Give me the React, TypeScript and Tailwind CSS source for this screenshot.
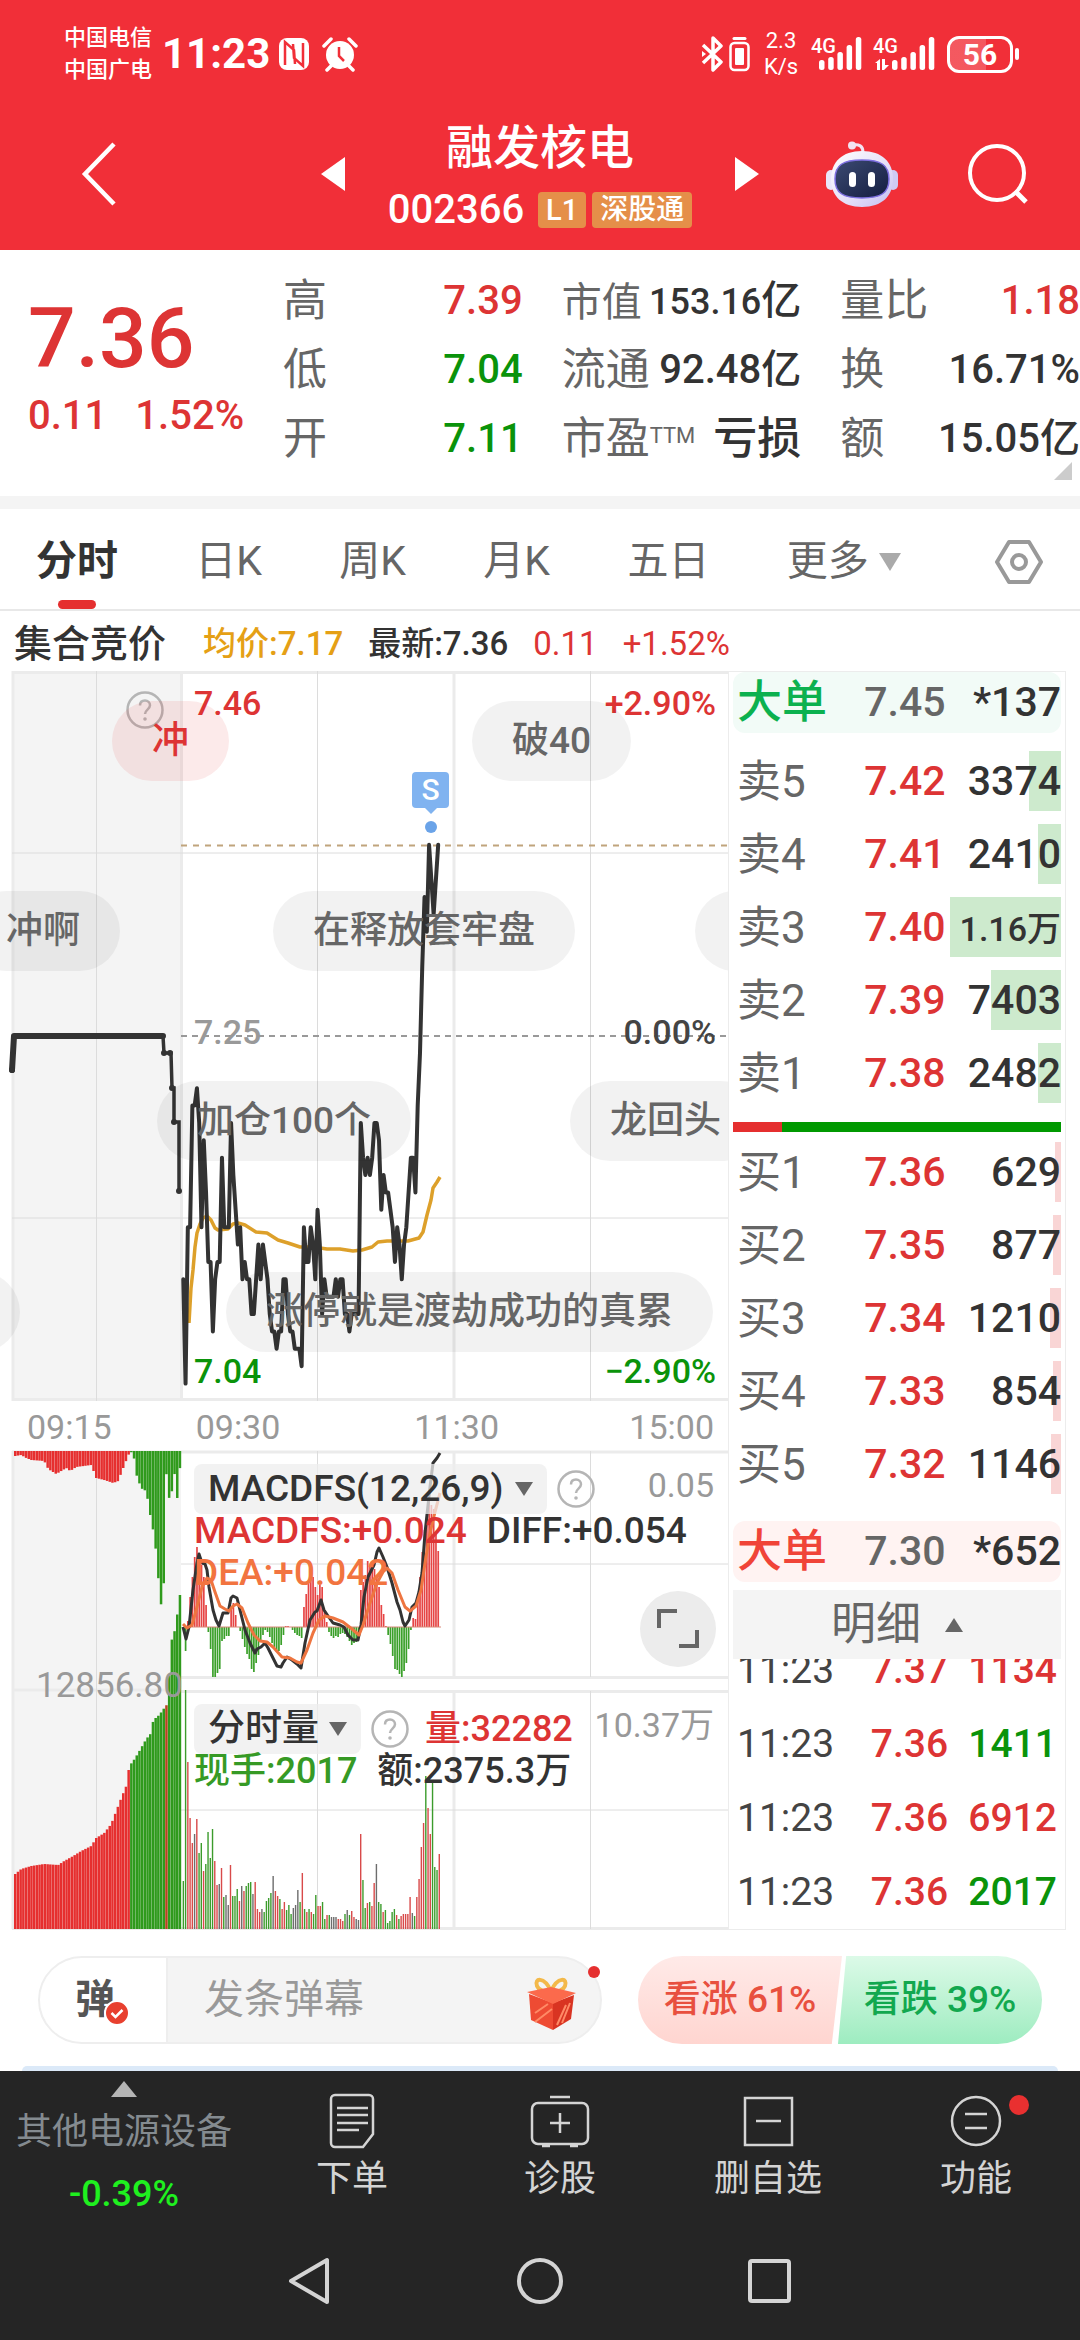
import React from 'react';

type Point = [number, number];

const DOWN = 'text-[#0a930a]';
const UP = 'text-[#dd3434]';

/* ---------- market data ---------- */

// cents below yesterday's close, one value per minute from 09:30
const ticks = [
  14, 20, 11, 11, 4, 4, 3, 5, 11, 6, 9, 13, 13, 17, 14, 13, 13, 7, 11, 11,
  11, 5, 8, 10, 12, 11, 14, 13, 14, 14, 16, 16, 14, 12, 14, 12, 13, 14, 16, 17,
  17, 18, 17, 17, 14, 14, 16, 17, 17, 18, 18, 18, 19, 11, 13, 13, 11, 12, 14, 10,
  12, 16, 14, 15, 15, 15, 15, 14, 15, 14, 14, 16, 16, 17, 16, 16, 16, 16, 5, 7,
  8, 7, 8, 7, 5, 5, 6, 10, 8, 9, 9, 10, 11, 13, 11, 12, 14, 12, 11, 9,
  7, 7, 9, 4, 1, -4, -8, -6, -11, -9, -7, -9, -11,
];

const average: Point[] = [
  [189, 652], [191, 617], [193, 599], [195, 576], [197, 562], [200, 553], [203, 547], [207, 545],
  [211, 549], [215, 557], [218, 559], [228, 558], [233, 553], [238, 552], [245, 554], [256, 561],
  [267, 562], [278, 569], [288, 572], [300, 576], [313, 576], [327, 578], [340, 578], [353, 580],
  [362, 579], [372, 576], [378, 571], [387, 570], [408, 570], [419, 567], [423, 561], [427, 544],
  [431, 529], [433, 517], [437, 511], [440, 506],
];

const macdBars = [
  0, -24, 6, 30, 50, 70, 80, 73, 62, 50, 22, -5, -22, -50, -50, -46, -42, -14, -12, -9,
  -9, 20, 24, 12, 0, -4, -12, -20, -27, -32, -42, -45, -36, -28, -13, -8, -3, -5, -10, -16,
  -20, -25, -24, -18, -8, 1, 1, 0, -3, -6, -8, -9, -11, 20, 33, 43, 48, 50, 40, 32,
  42, 40, 17, 5, -5, -9, -11, -9, -10, -7, -6, -7, -10, -14, -18, -16, -15, -8, 37, 45,
  52, 66, 60, 62, 58, 52, 40, 22, 13, 1, -8, -17, -29, -42, -43, -47, -50, -44, -36, -22,
  -3, 9, 8, 30, 50, 75, 97, 115, 130, 122, 118, 93, 76,
];

const diffLine: Point[] = [
  [183, 177], [186, 189], [189, 177], [193, 140], [197, 113], [199, 104], [202, 113], [205, 114],
  [207, 120], [209, 137], [213, 160], [216, 170], [219, 176], [223, 163], [228, 163], [231, 148],
  [233, 146], [237, 148], [240, 160], [245, 180], [250, 193], [255, 203], [257, 199], [261, 197],
  [265, 193], [268, 198], [273, 208], [277, 216], [281, 217], [283, 213], [287, 207], [292, 210],
  [297, 214], [301, 218], [305, 193], [310, 170], [315, 162], [317, 161], [321, 150], [324, 160],
  [328, 166], [333, 173], [340, 175], [344, 177], [348, 185], [353, 190], [358, 190], [361, 175],
  [364, 147], [368, 127], [374, 115], [377, 102], [379, 98], [383, 107], [387, 117], [392, 133],
  [397, 152], [400, 160], [403, 172], [405, 176], [409, 170], [412, 157], [416, 153], [419, 142],
  [422, 123], [425, 83], [430, 37], [433, 13], [437, 8], [440, 3],
];

const deaLine: Point[] = [
  [183, 174], [187, 178], [192, 175], [197, 157], [202, 137], [207, 128], [211, 130], [215, 142],
  [220, 156], [225, 159], [229, 161], [233, 156], [237, 154], [242, 158], [248, 173], [254, 185],
  [260, 191], [267, 192], [273, 197], [282, 207], [290, 208], [297, 212], [301, 213], [307, 200],
  [313, 183], [319, 170], [325, 166], [333, 168], [343, 172], [352, 179], [359, 185], [363, 175],
  [370, 153], [377, 133], [383, 122], [387, 118], [392, 123], [398, 140], [405, 157], [410, 161],
  [416, 156], [421, 140], [425, 113], [430, 83], [435, 62], [440, 43],
];

// r = up, g = down, k = flat
const volumes = (
  'g48 g239 r167 r111 r86 k95 r110 g76 g86 r58 g65 g97 g71 g100 r68 r44 k45 r61 g32 k34 ' +
  'k24 r64 g33 g33 g40 r28 k43 r38 g43 g46 g47 k35 r47 r20 r17 k20 g17 g28 g31 g36 ' +
  'k53 r38 r33 g30 r20 r27 g19 g24 g15 k21 k24 k39 g27 r56 g20 r17 g20 r17 g15 g34 ' +
  'r23 r23 g27 g10 r14 g14 k12 k12 k12 r10 r10 r8 g15 k19 g14 r18 r12 k10 k9 r95 ' +
  'g49 g21 r26 g27 r23 r46 k65 g27 g25 r17 g19 g6 g8 g17 g20 r14 g10 r13 r15 r15 ' +
  'r15 r32 k16 g13 r32 r50 r82 r106 g153 r121 r95 g147 g62 g59 r75'
).split(' ');

const volumeColors: Record<string, string> = { r: '#d84a4a', g: '#3c9c2c', k: '#6d6d6d' };

// call auction: depth of unmatched orders (top) and matched volume (bottom)
const unmatched: Point[] = [
  [14, 5], [20, 4], [25, 7], [30, 9], [43, 10], [47, 18], [55, 23], [60, 20], [65, 17], [69, 20],
  [75, 16], [90, 14], [95, 27], [103, 29], [112, 32], [117, 30], [120, 22], [124, 12], [127, 4],
  [130, 1], [133, 8], [136, 28], [141, 38], [145, 40], [149, 64], [152, 80], [155, 102],
  [158, 138], [160, 155], [162, 176], [164, 1], [166, 38], [169, 52], [172, 30], [175, 14],
  [177, 80], [179, 6], [181, 6],
];
const matched: Point[] = [
  [14, 55], [20, 60], [30, 63], [43, 65], [57, 64], [63, 68], [72, 73], [80, 78], [90, 83],
  [95, 91], [103, 96], [110, 105], [115, 118], [120, 131], [125, 143], [128, 163], [132, 168],
  [137, 176], [145, 190], [150, 196], [152, 209], [158, 214], [163, 221], [167, 226], [169, 287],
  [173, 293], [174, 309], [178, 320], [180, 360],
];

const valueAt = (points: Point[], x: number) => {
  const i = points.findIndex(([px]) => px >= x);
  if (i <= 0) return points[i === 0 ? 0 : points.length - 1][1];
  const [x0, y0] = points[i - 1];
  const [x1, y1] = points[i];
  return y0 + ((y1 - y0) * (x - x0)) / (x1 - x0);
};

const toPoints = (points: Point[]) => points.map((p) => p.join(',')).join(' ');
const minuteX = (i: number) => 181 + (i + 1) * 2.276;
const volumeX = (i: number) => 181 + (i + 1) * 2.245;
const pricePoints: Point[] = ticks.map((t, i) => [minuteX(i), 365 + t * 17.38]);
const auctionX = Array.from({ length: 62 }, (_, i) => 14 + i * 2.7);

/* ---------- small pieces ---------- */

const Triangle = ({ className, points }: { className: string; points: string }) => (
  <svg viewBox="0 0 20 20" preserveAspectRatio="none" className={className} aria-hidden="true">
    <polygon points={points} fill="currentColor" />
  </svg>
);

const Help = () => (
  <svg viewBox="0 0 38 38" className="w-[38px] h-[38px]" fill="none" stroke="#b5b5b5" aria-hidden="true">
    <circle cx="19" cy="19" r="17.5" strokeWidth="2.5" />
    <path d="M14 14.500c0-3.300 2.200-5 5-5s5 2 5 4.800c0 4.200-5 4.400-5 8.700" strokeWidth="2.500" />
    <circle cx="19" cy="28" r="1.800" fill="#b5b5b5" stroke="none" />
  </svg>
);

const Signal = ({ arrows = false }: { arrows?: boolean }) => (
  <svg viewBox="0 -6 62 48" className="w-[62px] h-12" fill="#fff" aria-hidden="true">
    <text x="0" y="17" fontSize="20" fontWeight="500" fontFamily="Roboto, sans-serif">4G</text>
    {arrows && <path d="M2 27l5-4v11h-3v-7zM9 23h3v6h4l-5 5h-2z" />}
    {[0, 1, 2, 3, 4].map((i) => (
      <rect key={i} x={(arrows ? 19 : 8) + i * 9.2} y={[24, 21, 16, 9, 1][i]} width="5.5" height={[10, 13, 18, 25, 33][i]} rx="2.500" />
    ))}
  </svg>
);

/* ---------- header ---------- */

const StatusBar = () => (
  <div className="h-[108px] flex items-center justify-between pl-16 pr-[61px]">
    <div className="flex items-center">
      <div className="text-[22px] leading-8 font-medium">
        <p>中国电信</p>
        <p>中国广电</p>
      </div>
      <span className="ml-2.5 text-[42px] leading-none font-bold">11:23</span>
      <svg viewBox="0 0 32 34" className="ml-2 w-8 h-[34px]" aria-hidden="true">
        <rect x="1" y="1" width="30" height="32" rx="8" fill="#fff" />
        <path d="M7 28V5l9 8 1 14M25 6v23l-9-8-1-14" fill="none" stroke="#f12f38" strokeWidth="2.500" />
      </svg>
      <svg viewBox="0 0 36 36" className="ml-3 w-9 h-9" aria-hidden="true">
        <circle cx="18" cy="19" r="14" fill="#fff" />
        <path d="M2 10l7-7M34 10l-7-7M9 30l-4 4M27 30l4 4" stroke="#fff" strokeWidth="3.500" strokeLinecap="round" />
        <path d="M17 11v9l5 5" fill="none" stroke="#f12f38" strokeWidth="2.500" />
      </svg>
    </div>
    <div className="flex items-center">
      <svg viewBox="0 0 50 36" className="w-[50px] h-9" fill="none" stroke="#fff" aria-hidden="true">
        <path d="M2 9l18 17-8 8V2l8 8L2 27" strokeWidth="3.500" strokeLinejoin="round" />
        <path d="M1 15l4 3-4 3z" fill="#fff" stroke="none" />
        <rect x="29.500" y="7" width="18" height="27" rx="4" strokeWidth="2.500" />
        <rect x="34" y="12" width="9" height="17" rx="1" fill="#fff" stroke="none" />
        <path d="M33 2.500h11" strokeWidth="3" strokeLinecap="round" />
      </svg>
      <div className="ml-3 w-9 text-center text-[22px] leading-[26px]">
        <p>2.3</p>
        <p>K/s</p>
      </div>
      <div className="ml-3"><Signal /></div>
      <Signal arrows />
      <div className="ml-3 h-[37px] w-[66px] rounded-xl border-[3px] border-white bg-linear-to-r from-white/20 from-60% to-transparent to-60% text-center text-[30px] leading-8 font-bold">
        56
      </div>
      <div className="ml-0.5 w-1 h-3 rounded-full bg-white" />
    </div>
  </div>
);

const Robot = () => (
  <svg viewBox="0 0 72 66" className="w-[72px] h-[66px]" aria-hidden="true">
    <defs>
      <linearGradient id="shell" x1="0" y1="0" x2="1" y2="1">
        <stop offset="0" stopColor="#ffffff" />
        <stop offset="0.600" stopColor="#e4def8" />
        <stop offset="1" stopColor="#c3bdf0" />
      </linearGradient>
      <linearGradient id="visor" x1="0" y1="0" x2="1" y2="1">
        <stop offset="0" stopColor="#3c4a72" />
        <stop offset="1" stopColor="#141d40" />
      </linearGradient>
    </defs>
    <path d="M27 4c6-1 10 1 10 7" fill="none" stroke="#f3e4f2" strokeWidth="3" />
    <circle cx="26" cy="4.500" r="4" fill="#f3e4f2" />
    <rect x="0" y="29" width="10" height="20" rx="5" fill="#e9e6fa" />
    <rect x="62" y="29" width="10" height="20" rx="5" fill="#cfcaf3" />
    <path d="M36 10c20 0 31 11 31 28S56 66 36 66 5 55 5 38s11-28 31-28z" fill="url(#shell)" />
    <path d="M36 19c19 0 27 5 27 19s-8 19-27 19S9 52 9 38s8-19 27-19z" fill="url(#visor)" stroke="#7d6fe0" strokeWidth="1.500" />
    <rect x="23" y="31" width="7" height="15" rx="3.500" fill="#fff" />
    <rect x="42" y="31" width="7" height="15" rx="3.500" fill="#fff" />
  </svg>
);

const Header = () => (
  <header className="bg-[#f12f38] text-white pb-2.5">
    <StatusBar />
    <div className="h-[132px] grid grid-cols-[1fr_auto_1fr] items-center">
      <button aria-label="返回" className="ml-20 w-10">
        <svg viewBox="0 0 38 66" className="w-[38px] h-[66px]" fill="none" stroke="#fff" strokeWidth="4.500">
          <path d="M34 3L5 33l29 30" />
        </svg>
      </button>
      <div className="w-[438px] flex items-center justify-between">
        <button aria-label="上一只"><Triangle className="w-6 h-[34px]" points="20,0 20,20 0,10" /></button>
        <div className="pt-2 text-center">
          <h1 className="text-[47px] leading-[64px] font-medium">融发核电</h1>
          <div className="flex items-center justify-center gap-1.5 leading-[60px] font-medium">
            <span className="mr-2 text-[40px]">002366</span>
            <span className="h-9 rounded-sm bg-[#e58f49] px-2 text-[29px] leading-9">L1</span>
            <span className="h-9 rounded-sm bg-[#e58f49] px-2 text-[28px] leading-9">深股通</span>
          </div>
        </div>
        <button aria-label="下一只"><Triangle className="w-6 h-[34px]" points="0,0 20,10 0,20" /></button>
      </div>
      <div className="flex items-center justify-end gap-[69px] pr-[51px]">
        <button aria-label="智能助手"><Robot /></button>
        <button aria-label="搜索">
          <svg viewBox="0 0 62 62" className="w-[62px] h-[62px]" fill="none" stroke="#fff" strokeWidth="4">
            <circle cx="30" cy="30" r="27" />
            <path d="M48 48l11 11" strokeWidth="5" />
          </svg>
        </button>
      </div>
    </div>
  </header>
);

/* ---------- quote ---------- */

const Stat = ({ label, tone = 'text-[#333]', children }: { label: React.ReactNode; tone?: string; children: React.ReactNode }) => (
  <div className="h-[69px] flex items-center justify-between whitespace-nowrap">
    <dt className="text-[44px] text-[#666]">{label}</dt>
    <dd className={`text-[40px] font-medium ${tone}`}>{children}</dd>
  </div>
);

const Quote = () => (
  <section className="relative flex h-[246px] pt-4">
    <div className={`w-[283px] pl-7 font-medium ${UP}`}>
      <p className="pt-7 text-[84px] leading-[90px]">7.36</p>
      <p className="flex gap-7 pt-1.5 text-[40px] leading-[52px]"><span>0.11</span><span>1.52%</span></p>
    </div>
    <dl className="flex-1 grid grid-cols-3 gap-x-[39px] content-start">
      <Stat label="高" tone={UP}>7.39</Stat>
      <Stat label={<span className="text-[40px]">市值</span>}><span className="text-[36px]">153.16</span>亿</Stat>
      <Stat label="量比" tone={UP}>1.18</Stat>
      <Stat label="低" tone={DOWN}>7.04</Stat>
      <Stat label="流通">92.48亿</Stat>
      <Stat label="换">16.71%</Stat>
      <Stat label="开" tone={DOWN}>7.11</Stat>
      <Stat label={<>市盈<sup className="text-[22px]">TTM</sup></>}><span className="text-[44px]">亏损</span></Stat>
      <Stat label="额">15.05亿</Stat>
    </dl>
    <Triangle className="absolute right-2 bottom-4 w-[18px] h-[18px] text-[#ccc]" points="20,0 20,20 0,20" />
  </section>
);

const Tabs = () => (
  <nav className="h-[102px] flex items-center justify-between px-9 border-b-2 border-[#e8e8e8] pt-1.5 text-[41px] text-[#666]">
    <button className="relative h-full font-bold text-[#333]">
      分时
      <span className="absolute bottom-0 left-1/2 -translate-x-1/2 w-[38px] h-[9px] rounded-full bg-[#e52f2f]" />
    </button>
    <button>日K</button>
    <button>周K</button>
    <button>月K</button>
    <button>五日</button>
    <button className="flex items-center gap-2.5">
      更多
      <Triangle className="w-[22px] h-[18px] text-[#aaa]" points="0,0 20,0 10,20" />
    </button>
    <button aria-label="设置" className="ml-4">
      <svg viewBox="0 0 50 46" className="w-[50px] h-[46px]" fill="none" stroke="#999" strokeWidth="4" strokeLinejoin="round">
        <path d="M15 3h20l12 20-12 20H15L3 23z" />
        <circle cx="25" cy="23" r="7" />
      </svg>
    </button>
  </nav>
);

const Legend = () => (
  <div className="h-[60px] flex items-center pt-1.5 pl-[14px] gap-[25px] text-[33px] text-[#333] whitespace-nowrap">
    <span className="mr-3 text-[38px] font-medium">集合竞价</span>
    <span className="text-[#e5a015] font-medium">均价:7.17</span>
    <span className="font-medium">最新:7.36</span>
    <span className={UP}>0.11</span>
    <span className={UP}>+1.52%</span>
  </div>
);

/* ---------- charts ---------- */

const bullets = [
  { text: '冲', place: 'left-[112px] top-[30px] bg-[#e52f2f]/10 text-[#dd3434]' },
  { text: '破40', place: 'left-[472px] top-[30px] bg-black/5 text-[#666]' },
  { text: '冲啊', place: 'left-[-34px] top-[220px] bg-black/5 text-[#666]' },
  { text: '在释放套牢盘', place: 'left-[273px] top-[220px] bg-black/5 text-[#666]' },
  { text: '', place: 'left-[695px] top-[220px] bg-black/5 text-[#666]' },
  { text: '加仓100个', place: 'left-[157px] top-[410px] bg-black/5 text-[#666]' },
  { text: '龙回头', place: 'left-[570px] top-[410px] bg-black/5 text-[#666]' },
  { text: '', place: 'left-[-60px] top-[601px] bg-black/5 text-[#666]' },
  { text: '涨停就是渡劫成功的真累', place: 'left-[226px] top-[601px] bg-black/5 text-[#666]' },
];

const PriceChart = () => (
  <div className="relative h-[730px] overflow-hidden text-[34px] leading-10 font-medium">
    <svg viewBox="0 0 728 730" preserveAspectRatio="none" className="w-full h-full" fill="none">
      <rect x="12" y="0" width="169" height="730" fill="#f4f4f4" />
      <path d="M12 1.500H728M12 728.500H728M13 0V730M181.500 0V730M454 0V730" stroke="#ebebeb" strokeWidth="3" />
      <path d="M12 182H728M12 547H728M96.500 0V730M317.500 0V730M590.500 0V730" stroke="#dcdcdc" strokeWidth="1" />
      <path d="M181 174.500H728" stroke="#c0a47c" strokeWidth="2" strokeDasharray="6 6" />
      <path d="M181 365H728" stroke="#999" strokeWidth="2" strokeDasharray="6 5" />
      <polyline points="12,399 14,365 163,365" stroke="#333" strokeWidth="6" strokeLinecap="round" strokeLinejoin="round" />
      <polyline points="163,365 164,382 171,382 172,417 174,417 174,451 179,451 179,520" stroke="#333" strokeWidth="3.500" strokeLinecap="round" />
      {([[12, 399], [164, 382], [170, 382], [172, 417], [174, 451], [179, 520]] as Point[]).map(([x, y]) => (
        <circle key={`${x}-${y}`} cx={x} cy={y} r="3" fill="#333" />
      ))}
      <polyline points={toPoints(average)} stroke="#dda02a" strokeWidth="3.500" strokeLinejoin="round" />
      <polyline points={toPoints(pricePoints)} stroke="#333" strokeWidth="4" strokeLinejoin="round" strokeLinecap="round" />
      <circle cx="431" cy="156" r="6" fill="#6aa3e8" />
    </svg>
    <span className={`absolute left-[194px] top-3 ${UP}`}>7.46</span>
    <span className={`absolute right-3 top-3 ${UP}`}>+2.90%</span>
    <span className="absolute left-[194px] top-[341px] text-[#999]">7.25</span>
    <span className="absolute right-3 top-[341px] text-[#444]">0.00%</span>
    <span className={`absolute left-[194px] bottom-2.5 ${DOWN}`}>7.04</span>
    <span className={`absolute right-3 bottom-2.5 ${DOWN}`}>−2.90%</span>
    <div className="absolute left-[126px] top-5"><Help /></div>
    <div className="absolute left-[412px] top-[101px] flex flex-col items-center">
      <span className="w-[37px] h-9 rounded-sm bg-[#80b3f0] text-center text-[30px] leading-9 text-white">S</span>
      <Triangle className="w-3 h-1.5 text-[#80b3f0]" points="0,0 20,0 10,20" />
    </div>
    {bullets.map(({ text, place }) => (
      <span key={place} className={`absolute h-20 rounded-full px-10 text-[37px] leading-20 whitespace-nowrap ${place}`}>
        {text}
      </span>
    ))}
  </div>
);

const IndicatorCharts = () => (
  <div className="relative h-[480px] overflow-hidden text-[37px] leading-[42px] font-medium text-[#333] whitespace-nowrap">
    <svg viewBox="0 0 728 480" preserveAspectRatio="none" className="w-full h-full" fill="none">
      <rect x="12" y="1" width="169" height="478" fill="#f4f4f4" />
      <path d="M12 2H728M181 227.500H728M181 241.500H728M12 240H181M12 478.500H728M13 1V479M454 1V227M454 241V479" stroke="#ebebeb" strokeWidth="3" />
      <path d="M181 114H728M181 360H728M96.500 1V479M317.500 1V227M317.500 241V479M590.500 1V227M590.500 241V479" stroke="#dcdcdc" strokeWidth="1" />
      {auctionX.map((x) => {
        const color = x < 130 ? '#e62f2f' : '#2f9a1c';
        return (
          <g key={x} fill={color}>
            <rect x={x} y="1" width="2.500" height={valueAt(unmatched, x)} />
            <rect x={x} y={479 - valueAt(matched, x)} width="2.500" height={valueAt(matched, x)} fill={Math.abs(x - 164) < 1.4 ? '#b8451f' : color} />
          </g>
        );
      })}
      {macdBars.map((v, i) => (
        <rect key={i} x={minuteX(i) - 0.8} y={v > 0 ? 177 - v : 177} width="1.700" height={Math.abs(v)} fill={v > 0 ? '#e64545' : '#3ba02a'} />
      ))}
      <path d="M183 177H441" stroke="#d98a7a" strokeWidth="1" />
      <polyline points={toPoints(diffLine)} stroke="#333" strokeWidth="3" strokeLinejoin="round" />
      <polyline points={toPoints(deaLine)} stroke="#ee7540" strokeWidth="3" strokeLinejoin="round" />
      {volumes.map((v, i) => {
        const height = Number(v.slice(1));
        return <rect key={i} x={volumeX(i) - 0.6} y={479 - height} width="1.400" height={height} fill={volumeColors[v[0]]} />;
      })}
    </svg>

    <div className="absolute inset-x-0 top-3.5 pl-[194px] pr-3.5">
      <div className="flex items-center">
        <button className="h-[50px] flex items-center gap-3 rounded-lg bg-[#ededed]/75 px-3.5">
          MACDFS(12,26,9)
          <Triangle className="w-[18px] h-3.5 text-[#666]" points="0,0 20,0 10,20" />
        </button>
        <div className="ml-2.5"><Help /></div>
        <span className="ml-auto self-start text-[34px] font-normal text-[#999]">0.05</span>
      </div>
      <p className="-mt-1 flex gap-5">
        <span className={UP}>MACDFS:+0.024</span>
        <span>DIFF:+0.054</span>
      </p>
      <p className="text-[#f27440]">DEA:+0.042</p>
    </div>
    <button aria-label="全屏" className="absolute right-3 top-[141px] w-[76px] h-[76px] rounded-full bg-[#ececec]">
      <svg viewBox="0 0 76 76" fill="none" stroke="#666" strokeWidth="4">
        <path d="M19 37V20H37M39 55H57V39" />
      </svg>
    </button>

    <span className="absolute left-9 top-[215px] text-[35px] font-normal text-[#999]">12856.80</span>

    <div className="absolute inset-x-0 top-[254px] pl-[194px] pr-3.5">
      <div className="flex items-center">
        <button className="h-[50px] flex items-center gap-2.5 rounded-lg bg-[#ededed]/75 px-3.5">
          分时量
          <Triangle className="w-[18px] h-3.5 text-[#666]" points="0,0 20,0 10,20" />
        </button>
        <div className="ml-2.5"><Help /></div>
        <span className={`ml-4 text-[36px] ${UP}`}>量:32282</span>
        <span className="ml-auto self-start text-[34px] font-normal text-[#999]">10.37万</span>
      </div>
      <p className="-mt-1 flex gap-5 text-[36px]">
        <span className="text-[#369a25]">现手:2017</span>
        <span>额:2375.3万</span>
      </p>
    </div>
  </div>
);

/* ---------- order book ---------- */

type Level = [label: string, price: string, size: string, bar: number];

const sells: Level[] = [
  ['卖5', '7.42', '3374', 32],
  ['卖4', '7.41', '2410', 23],
  ['卖3', '7.40', '1.16万', 111],
  ['卖2', '7.39', '7403', 70],
  ['卖1', '7.38', '2482', 23],
];
const buys: Level[] = [
  ['买1', '7.36', '629', 6],
  ['买2', '7.35', '877', 8],
  ['买3', '7.34', '1210', 11],
  ['买4', '7.33', '854', 8],
  ['买5', '7.32', '1146', 10],
];
const trades = [
  ['11:23', '7.37', '1134', UP],
  ['11:23', '7.36', '1411', DOWN],
  ['11:23', '7.36', '6912', UP],
  ['11:23', '7.36', '2017', DOWN],
];

const Levels = ({ rows, barColor }: { rows: Level[]; barColor: string }) => (
  <table className="w-full table-fixed text-[41px] leading-none whitespace-nowrap">
    <tbody>
      {rows.map(([label, price, size, bar]) => (
        <tr key={label} className="h-[73px]">
          <th scope="row" className="w-[40%] pl-1 text-left text-[44px] font-normal text-[#666]">{label}</th>
          <td className={`w-[26%] font-medium ${UP}`}>{price}</td>
          <td className="relative text-right font-medium text-[#333]">
            <span className={`absolute right-0 top-1.5 h-[60px] ${barColor}`} style={{ width: bar }} />
            <span className={size.includes('万') ? 'relative text-[34px]' : 'relative'}>{size}</span>
          </td>
        </tr>
      ))}
    </tbody>
  </table>
);

const BigOrder = ({ tone, price, size }: { tone: string; price: string; size: string }) => (
  <div className={`h-[61px] flex items-center rounded-xl text-[41px] font-medium ${tone}`}>
    <span className="w-[40%] pl-1 text-[45px]">大单</span>
    <span className="text-[#666]">{price}</span>
    <span className="ml-auto text-[#333]">*{size}</span>
  </div>
);

const OrderBook = () => (
  <aside className="w-[338px] mr-3.5 border border-[#ececec] px-1">
    <BigOrder tone="bg-[#f2fbf7] text-[#0cb14f]" price="7.45" size="137" />
    <div className="mt-3"><Levels rows={sells} barColor="bg-[#cdeacd]" /></div>
    <div className="mt-3 mb-1 h-2.5 flex">
      <div className="w-[15%] bg-[#e52f2f]" />
      <div className="flex-1 bg-[#009900]" />
    </div>
    <Levels rows={buys} barColor="bg-[#f9d5d5]" />
    <div className="mt-5"><BigOrder tone="bg-[#fff3f2] text-[#f04438]" price="7.30" size="652" /></div>
    <button className="mt-2 h-[69px] w-full flex items-center justify-center gap-6 bg-[#f4f4f4] text-[45px] text-[#666]">
      明细
      <Triangle className="w-[18px] h-3.5" points="0,20 20,20 10,0" />
    </button>
    <div className="h-[270px] overflow-hidden flex flex-col justify-end">
      <table className="w-full table-fixed text-[39px] leading-none font-medium">
        <tbody>
          {trades.map(([time, price, size, tone], i) => (
            <tr key={i} className="h-[74px]">
              <td className="w-[42%] pl-1 font-normal text-[#444]">{time}</td>
              <td className={`w-[26%] ${UP}`}>{price}</td>
              <td className={`pr-1 text-right ${tone}`}>{size}</td>
            </tr>
          ))}
        </tbody>
      </table>
    </div>
  </aside>
);

/* ---------- bottom ---------- */

const Gift = () => (
  <svg viewBox="0 0 50 54" className="w-[50px] h-[54px]" aria-hidden="true">
    <path d="M25 14C18-1 8 1 11 9c2 5 8 6 14 6 6 0 12-1 14-6 3-8-7-10-14 5z" fill="none" stroke="#f3b94a" strokeWidth="4" />
    <path d="M3 17l24 9v27L5 43z" fill="#ee4b33" />
    <path d="M27 26l21-8-3 24-18 11z" fill="#d93422" />
    <path d="M1 15l24-5 25 6-23 11z" fill="#fb6a4c" />
    <path d="M9 36l13-9M9 45l17-13M31 48l9-20M36 46l8-20" stroke="#ff8a66" strokeWidth="2" />
  </svg>
);

const CommentBar = () => (
  <div className="flex items-center justify-between px-[38px] pt-[26px] pb-[22px]">
    <div className="relative flex h-[88px] w-[564px] rounded-full border-2 border-[#eee] bg-[#f4f4f4]">
      <button aria-label="弹幕开关" className="relative w-32 rounded-l-full border-r-2 border-[#eee] bg-white pr-4 text-[40px] font-bold text-[#555]">
        弹
        <svg viewBox="0 0 26 26" className="absolute left-16 top-[42px] w-[26px] h-[26px]" aria-hidden="true">
          <circle cx="13" cy="13" r="12" fill="#e8402f" stroke="#fff" strokeWidth="2" />
          <path d="M7.500 13l4 4 7-7" fill="none" stroke="#fff" strokeWidth="2.500" />
        </svg>
      </button>
      <input
        aria-label="发条弹幕"
        placeholder="发条弹幕"
        className="min-w-0 flex-1 bg-transparent pl-9 text-[40px] outline-none placeholder:text-[#999]"
      />
      <div className="self-center pt-2 pr-6"><Gift /></div>
      <span className="absolute right-0 top-2 w-3 h-3 rounded-full bg-[#e52f2f]" />
    </div>
    <div className="flex text-[37px] font-medium whitespace-nowrap">
      <button className="h-[88px] w-[204px] rounded-l-full bg-linear-to-b from-[#ffeae8] to-[#ffd5d0] text-[#e8503f] [clip-path:polygon(0_0,100%_0,95%_100%,0_100%)]">看涨 61%</button>
      <button className="-ml-1 h-[88px] w-[204px] rounded-r-full bg-linear-to-b from-[#dcfae8] to-[#9decc0] text-[#12a84f] [clip-path:polygon(4%_0,100%_0,100%_100%,0_100%)]">看跌 39%</button>
    </div>
  </div>
);

const actions = [
  {
    label: '下单',
    icon: (
      <>
        <path d="M9 3h34a4 4 0 0 1 4 4v35L37 55H9a4 4 0 0 1-4-4V7a4 4 0 0 1 4-4z" />
        <path d="M11 16h31M11 23h31M11 31h31M11 38h22" />
      </>
    ),
  },
  {
    label: '诊股',
    icon: (
      <>
        <rect x="-2" y="11" width="56" height="41" rx="6" />
        <path d="M16 5h20M26 21v20M16 31h20M8 54h8M36 54h8" />
      </>
    ),
  },
  { label: '删自选', icon: (<><rect x="3" y="6" width="47" height="47" /><path d="M14 29h25" /></>) },
  { label: '功能', icon: (<><circle cx="26" cy="29" r="24" /><path d="M15 22h22M15 36h22" /></>) },
];

const BottomBar = () => (
  <footer className="h-[269px] bg-[#252525] text-[#d4d4d4]">
    <div className="flex">
      <button className="w-[248px] flex flex-col items-center pt-2.5 text-[36px] leading-[54px] text-[#848b90]">
        <Triangle className="mb-2 w-[26px] h-4 text-[#b5b5b5]" points="0,20 20,20 10,0" />
        其他电源设备
        <span className="mt-2 font-medium text-[#1ff01f]">-0.39%</span>
      </button>
      <div className="flex-1 grid grid-cols-4">
        {actions.map(({ label, icon }) => (
          <button key={label} className="relative flex flex-col items-center pt-5 text-[36px] leading-[56px]">
            <svg viewBox="-4 0 60 58" className="w-[60px] h-[60px]" fill="none" stroke="#d4d4d4" strokeWidth="2.500" aria-hidden="true">
              {icon}
            </svg>
            {label}
            {label === '功能' && <span className="absolute left-[137px] top-6 w-5 h-5 rounded-full bg-[#e93030]" />}
          </button>
        ))}
      </div>
    </div>
    <div className="flex justify-center gap-[184px] pt-9">
      <svg viewBox="0 0 46 48" className="w-[46px] h-12" fill="none" stroke="#d4d4d4" strokeWidth="4" strokeLinejoin="round"><path d="M40 3v42L4 24z" /></svg>
      <svg viewBox="0 0 46 48" className="w-[46px] h-12" fill="none" stroke="#d4d4d4" strokeWidth="4"><circle cx="23" cy="24" r="21" /></svg>
      <svg viewBox="0 0 46 48" className="w-[46px] h-12" fill="none" stroke="#d4d4d4" strokeWidth="4"><rect x="3" y="4" width="39" height="40" rx="2" /></svg>
    </div>
  </footer>
);

const App: React.FC = () => {
  return (
    <div className="min-h-screen bg-white overflow-hidden font-['Roboto','Noto_Sans_CJK_SC',sans-serif]">
      <Header />
      <Quote />
      <div className="h-[13px] bg-[#f4f4f4]" />
      <Tabs />
      <Legend />
      <main className="flex">
        <div className="min-w-0 flex-1">
          <PriceChart />
          <div className="h-[49px] flex items-center pl-[27px] pr-3.5 pt-1 text-[34px] text-[#999]">
            <span>09:15</span>
            <span className="ml-[84px]">09:30</span>
            <span className="ml-[134px]">11:30</span>
            <span className="ml-auto">15:00</span>
          </div>
          <IndicatorCharts />
        </div>
        <OrderBook />
      </main>
      <CommentBar />
      <div className="mx-[22px] h-[5px] rounded-t-lg bg-[#dbe9f8]" />
      <BottomBar />
    </div>
  );
};

export default App;
